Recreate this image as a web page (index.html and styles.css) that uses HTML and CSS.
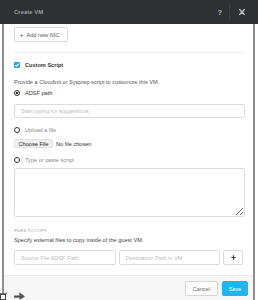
FILE: index.html
```html
<!DOCTYPE html>
<html lang="en">
<head>
  <meta charset="UTF-8">
  <title>Create VM</title>
  <link rel="stylesheet" href="styles.css">
</head>
<body>

<div class="modal">
  <header class="modal-head">
    <span class="title">Create VM</span>
    <span class="help">?</span>
    <span class="sep"></span>
    <svg class="close" width="6" height="6" viewBox="0 0 6 6"><path d="M0.6 0.6L5.4 5.4M5.4 0.6L0.6 5.4" stroke="#bdbdbd" stroke-width="1.4" stroke-linecap="round"/></svg>
  </header>

  <div class="frame">
    <div class="modal-body">
      <button class="btn-nic"><span class="plus">+</span> Add new NIC</button>
      <div class="divider"></div>

      <label class="row row-check">
        <span class="checkbox">
          <svg width="6" height="6" viewBox="0 0 6 6"><path d="M1.2 3.1L2.5 4.3L4.9 1.6" fill="none" stroke="#fff" stroke-width="1.1"/></svg>
        </span>
        <span class="check-label">Custom Script</span>
      </label>

      <p class="hint">Provide a Cloudinit or Sysprep script to customize this VM.</p>

      <label class="row row-adsf">
        <span class="radio on"></span>
        <span class="radio-label active">ADSF path</span>
      </label>
      <input class="field field-adsf" type="text" placeholder="Start typing for suggestions">

      <label class="row row-upload">
        <span class="radio"></span>
        <span class="radio-label">Upload a file</span>
      </label>
      <div class="file-row">
        <span class="file-btn">Choose File</span>
        <span class="file-name">No file chosen</span>
      </div>

      <label class="row row-type">
        <span class="radio"></span>
        <span class="radio-label">Type or paste script</span>
      </label>
      <textarea class="script-box"></textarea>

      <div class="section-title">FILES TO COPY</div>
      <p class="hint hint-files">Specify external files to copy inside of the guest VM.</p>
      <div class="copy-row">
        <input class="field" type="text" placeholder="Source File ADSF Path">
        <input class="field" type="text" placeholder="Destination Path in VM">
        <button class="btn-add">
          <svg width="5" height="5" viewBox="0 0 5 5"><path d="M2.5 0.3V4.7M0.3 2.5H4.7" stroke="#333" stroke-width="1.1"/></svg>
        </button>
      </div>
    </div>

    <footer class="modal-foot">
      <button class="btn btn-cancel">Cancel</button>
      <button class="btn btn-save">Save</button>
    </footer>
  </div>

  <svg class="dock-box" width="7" height="7" viewBox="0 0 7 7"><rect x="0.5" y="1.5" width="5" height="5" fill="#fff" stroke="#444" stroke-width="1"/><path d="M0 0.6H7" stroke="#666" stroke-width="1"/></svg>
  <svg class="dock-arrow" width="11" height="8" viewBox="0 0 11 8"><path d="M0 3.4H5.5V0.3L11 4.6L5.5 8V5.8H0Z" fill="#555"/></svg>
</div>

</body>
</html>
```

FILE: styles.css
```css
body {
  margin: 0;
  width: 258px;
  height: 300px;
  overflow: hidden;
  background: #fff;
  font-family: "Liberation Sans", Arial, sans-serif;
  font-size: 5.6px;
  color: #444;
}

.modal {
  position: relative;
  height: 300px;
}

.modal-head {
  height: 24px;
  background: #2f3032;
  display: flex;
  align-items: center;
  padding: 0 13px 0 14px;
}

.title {
  flex: 1;
  color: #9c9c9c;
  font-weight: bold;
  font-size: 6px;
}

.help {
  color: #b8b8b8;
  font-weight: bold;
  font-size: 7.5px;
}

.sep {
  width: 1px;
  height: 16px;
  background: #3d3e40;
  margin: 0 9px 0 7px;
}

.frame {
  margin: 0 3px 0 2px;
  border-left: 2px solid #8e8e8e;
  border-right: 2px solid #8e8e8e;
  height: 276px;
  display: flex;
  flex-direction: column;
}

.modal-body {
  padding: 3px 8px 10px 10px;
}

button, input, textarea {
  font-family: inherit;
  font-size: 5.6px;
  box-sizing: border-box;
  margin: 0;
}

.btn-nic {
  display: block;
  width: 54px;
  height: 15px;
  padding: 0 0 0 5px;
  text-align: left;
  background: #fff;
  border: 1px solid #d9d9d9;
  border-radius: 2px;
  color: #555;
}

.btn-nic .plus {
  font-weight: bold;
  margin-right: 2px;
}

.divider {
  margin-top: 10px;
  border-top: 1px solid #eeeeee;
}

.row {
  display: flex;
  align-items: center;
  height: 8px;
}

.row-check { margin-top: 8px; }
.row-adsf { margin-top: 3px; }
.row-upload { margin-top: 8px; }
.row-type { margin-top: 8px; }

.checkbox {
  width: 6px;
  height: 6px;
  border-radius: 1px;
  background: #23a6e5;
  display: flex;
  align-items: center;
  justify-content: center;
  margin-right: 5px;
}

.check-label {
  font-weight: bold;
  color: #333;
}

.hint {
  margin: 9px 0 0;
  line-height: 8px;
  color: #555;
}

.radio {
  width: 6px;
  height: 6px;
  box-sizing: border-box;
  border: 1.3px solid #333;
  border-radius: 50%;
  margin-right: 5px;
  background: #fff;
}

.radio.on {
  background: radial-gradient(circle, #333 0 1.4px, #fff 1.6px);
}

.radio-label {
  color: #888;
}

.radio-label.active {
  color: #333;
}

.field {
  display: block;
  width: 100%;
  height: 14px;
  border: 1px solid #dcdcdc;
  border-radius: 2px;
  padding: 0 6px;
  background: #fff;
  color: #444;
}

.field::placeholder {
  color: #bbb;
}

.field-adsf {
  margin-top: 7px;
}

.file-row {
  margin-top: 5px;
  height: 9px;
  display: flex;
  align-items: center;
}

.file-btn {
  width: 39px;
  height: 9px;
  box-sizing: border-box;
  background: #efefef;
  border: 1px solid #e3e3e3;
  border-radius: 2px;
  display: flex;
  align-items: center;
  justify-content: center;
  color: #222;
  margin-right: 3px;
}

.file-name {
  color: #333;
}

.script-box {
  display: block;
  margin-top: 4px;
  width: 100%;
  height: 49px;
  border: 1px solid #dcdcdc;
  border-radius: 2px;
  resize: vertical;
}

.section-title {
  margin-top: 11px;
  line-height: 6px;
  font-size: 4.4px;
  color: #999;
}

.hint-files {
  margin-top: 2px;
  color: #444;
}

.copy-row {
  margin-top: 6px;
  margin-right: 2px;
  display: grid;
  grid-template-columns: 1fr 1fr 20px;
  column-gap: 3px;
}

.copy-row .field {
  height: 15px;
}

.btn-add {
  height: 15px;
  background: #fff;
  border: 1px solid #dcdcdc;
  border-radius: 2px;
  padding: 0;
  display: flex;
  align-items: center;
  justify-content: center;
}

.modal-foot {
  flex: 1;
  background: #f6f6f6;
  border-top: 1px solid #ececec;
  display: flex;
  justify-content: flex-end;
  align-items: flex-start;
  gap: 4px;
  padding: 5px 5px 0;
}

.btn {
  height: 15px;
  border-radius: 2px;
  padding: 0;
}

.btn-cancel {
  width: 33px;
  background: #fff;
  border: 1px solid #d6d6d6;
  color: #666;
}

.btn-save {
  width: 26px;
  background: #1fb5ee;
  border: 1px solid #1fb5ee;
  color: #fff;
}

.dock-box {
  position: absolute;
  left: 0;
  top: 293px;
}

.dock-arrow {
  position: absolute;
  left: 14px;
  top: 292px;
}
```
